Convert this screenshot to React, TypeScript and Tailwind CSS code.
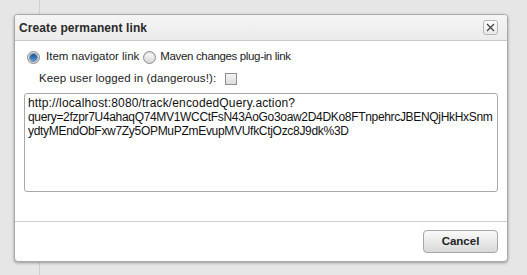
import React from "react";

function Radio({ checked }: { checked?: boolean }) {
  return (
    <span className="flex h-[13px] w-[13px] shrink-0 items-center justify-center rounded-full border border-[#8a8a8a] bg-gradient-to-b from-[#fdfdfd] to-[#d6d6d6] shadow-[inset_0_1px_1px_rgba(0,0,0,0.15)]">
      {checked ? (
        <span className="h-[7px] w-[7px] rounded-full bg-gradient-to-b from-[#1c4f8c] to-[#4b9be0] shadow-[0_0_0_1px_rgba(20,60,110,0.5)]" />
      ) : null}
    </span>
  );
}

export default function App() {
  return (
    <div
      className="relative h-[275px] w-[527px] overflow-hidden bg-[#e6e6e6] pt-[14px] text-[#222]"
      style={{ fontFamily: '"Liberation Sans", Arial, sans-serif' }}
    >
      <div className="absolute left-[39px] top-0 h-full w-px bg-[#cfcfcf]" />

      <div className="relative ml-[14px] flex h-[248px] w-[494px] flex-col overflow-hidden rounded-[4px] border border-[#a9a9a9] bg-white shadow-[0_1px_3px_rgba(0,0,0,0.35)]">
        <div className="flex h-[26px] shrink-0 items-center justify-between border-b border-[#c9c9c9] bg-gradient-to-b from-[#f5f5f5] to-[#ebebeb] pl-[4px] pr-[9px]">
          <span className="text-[12px] font-bold tracking-[0.1px] text-[#2a2a2a]">Create permanent link</span>
          <button className="flex h-[15px] w-[15px] items-center justify-center rounded-[3px] border border-[#b5b5b5] bg-gradient-to-b from-white to-[#e9e9e9]">
            <svg width="9" height="9" viewBox="0 0 9 9">
              <path d="M1 1L8 8M8 1L1 8" stroke="#444" strokeWidth="1.3" />
            </svg>
          </button>
        </div>

        <div className="flex flex-1 flex-col pt-[9px]">
          <div className="flex h-[14px] items-center pl-[12px] text-[11.5px]">
            <Radio checked />
            <span className="ml-[6px]">Item navigator link</span>
            <span className="ml-[4px]">
              <Radio />
            </span>
            <span className="ml-[4px] tracking-[-0.35px]">Maven changes plug-in link</span>
          </div>

          <div className="mt-[8px] flex h-[14px] items-center pl-[24px] text-[11.5px]">
            <span className="tracking-[0.1px]">Keep user logged in (dangerous!):</span>
            <span className="ml-[9px] h-[12px] w-[12px] border border-[#8f8f8f] bg-gradient-to-b from-[#f4f4f4] to-[#dcdcdc]" />
          </div>

          <div className="ml-[9px] mt-[7px] h-[99px] w-[474px] overflow-hidden rounded-[3px] border border-[#a8a8b0] px-[3px] pt-[2px] text-[12px] leading-[14px] text-[#111]">
            <div className="whitespace-nowrap tracking-[0.15px]">http://localhost:8080/track/encodedQuery.action?</div>
            <div className="whitespace-nowrap tracking-[-0.32px]">query=2fzpr7U4ahaqQ74MV1WCCtFsN43AoGo3oaw2D4DKo8FTnpehrcJBENQjHkHxSnm</div>
            <div className="whitespace-nowrap tracking-[-0.3px]">ydtyMEndObFxw7Zy5OPMuPZmEvupMVUfkCtjOzc8J9dk%3D</div>
          </div>
        </div>

        <div className="flex h-[40px] shrink-0 items-start justify-end border-t border-[#cfcfcf] pr-[9px] pt-[8px]">
          <button className="h-[23px] w-[75px] rounded-[4px] border border-[#a6a6a6] bg-gradient-to-b from-[#fafafa] to-[#d9d9d9] text-[11.5px] font-bold text-[#222] shadow-[0_1px_0_rgba(255,255,255,0.8)]">
            Cancel
          </button>
        </div>
      </div>
    </div>
  );
}
